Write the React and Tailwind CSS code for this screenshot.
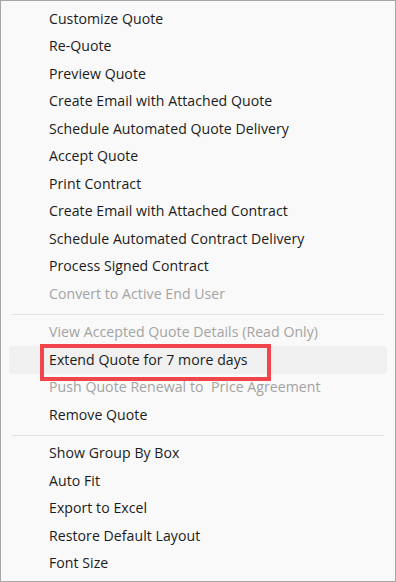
import React from "react";

const groups = [
  [
    ["Customize Quote"],
    ["Re-Quote"],
    ["Preview Quote"],
    ["Create Email with Attached Quote"],
    ["Schedule Automated Quote Delivery"],
    ["Accept Quote"],
    ["Print Contract"],
    ["Create Email with Attached Contract"],
    ["Schedule Automated Contract Delivery"],
    ["Process Signed Contract"],
    ["Convert to Active End User", "disabled"],
  ],
  [
    ["View Accepted Quote Details (Read Only)", "disabled"],
    ["Extend Quote for 7 more days", "hover"],
    ["Push Quote Renewal to\u00a0 Price Agreement", "disabled"],
    ["Remove Quote"],
  ],
  [
    ["Show Group By Box"],
    ["Auto Fit"],
    ["Export to Excel"],
    ["Restore Default Layout"],
    ["Font Size"],
  ],
];

function Item({ label, state }) {
  const hover = state === "hover";
  const disabled = state === "disabled";
  return (
    <div
      className={
        "relative h-[27.5px] mx-[8px] rounded-[4px] flex items-center pl-[40px] " +
        (hover ? "bg-[#f0f0f0]" : "")
      }
    >
      <span
        className={
          "text-[14.1px] tracking-[0.05px] leading-none whitespace-pre " +
          (disabled ? "text-[#a3a3a3]" : "text-[#1b1b1b]")
        }
      >
        {label}
      </span>
      {hover && (
        <div className="absolute left-[31px] top-[-2.5px] w-[231px] h-[37px] border-[4px] border-[#f2444b]" />
      )}
    </div>
  );
}

export default function App() {
  return (
    <div
      className="w-[396px] h-[582px] bg-[#f9f9f9] border border-[#a6a6a6] pt-[4px] overflow-hidden"
      style={{ fontFamily: '"Open Sans", "Noto Sans", sans-serif' }}
    >
      {groups.map((g, gi) => (
        <div key={gi}>
          {gi > 0 && (
            <div className="mx-[11px] mt-[6px] mb-[4px] h-px bg-[#e3e3e3]" />
          )}
          {g.map(([label, state]) => (
            <Item key={label} label={label} state={state} />
          ))}
        </div>
      ))}
    </div>
  );
}
